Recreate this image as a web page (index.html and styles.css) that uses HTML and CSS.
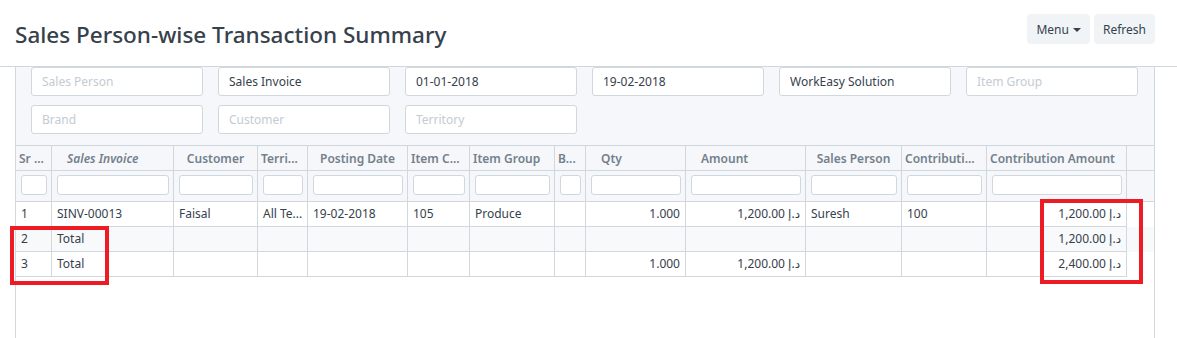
FILE: index.html
```html
<!DOCTYPE html>
<html>
  <head>
    <title>Sales Person-wise Transaction Summary</title>
    <meta name="viewport" content="width=device-width, initial-scale=1.0">
    <link rel="stylesheet" href="styles.css">
  </head>
  <body>
    <div class="css-head">
      <h1 class="css-title">Sales Person-wise Transaction Summary</h1>
      <div class="css-actions">
        <button class="css-button">Menu <span class="css-caret"></span></button>
        <button class="css-button">Refresh</button>
      </div>
    </div>

    <div class="css-page">
      <div class="css-filters">
        <input class="css-input" placeholder="Sales Person">
        <input class="css-input" value="Sales Invoice">
        <input class="css-input" value="01-01-2018">
        <input class="css-input" value="19-02-2018">
        <input class="css-input" value="WorkEasy Solution">
        <input class="css-input" placeholder="Item Group">
        <input class="css-input" placeholder="Brand">
        <input class="css-input" placeholder="Customer">
        <input class="css-input" placeholder="Territory">
      </div>

      <div class="css-table">
        <div class="css-row css-row-head">
          <div class="css-cell">Sr ...</div>
          <div class="css-cell css-pad css-sorted">Sales Invoice</div>
          <div class="css-cell css-center">Customer</div>
          <div class="css-cell">Terri...</div>
          <div class="css-cell css-center">Posting Date</div>
          <div class="css-cell">Item C...</div>
          <div class="css-cell">Item Group</div>
          <div class="css-cell">B...</div>
          <div class="css-cell css-pad">Qty</div>
          <div class="css-cell css-pad">Amount</div>
          <div class="css-cell css-center">Sales Person</div>
          <div class="css-cell">Contributi...</div>
          <div class="css-cell">Contribution Amount</div>
          <div class="css-cell css-last"></div>
        </div>

        <div class="css-row css-row-filter">
          <div class="css-cell"><input class="css-small"></div>
          <div class="css-cell"><input class="css-small"></div>
          <div class="css-cell"><input class="css-small"></div>
          <div class="css-cell"><input class="css-small"></div>
          <div class="css-cell"><input class="css-small"></div>
          <div class="css-cell"><input class="css-small"></div>
          <div class="css-cell"><input class="css-small"></div>
          <div class="css-cell"><input class="css-small"></div>
          <div class="css-cell"><input class="css-small"></div>
          <div class="css-cell"><input class="css-small"></div>
          <div class="css-cell"><input class="css-small"></div>
          <div class="css-cell"><input class="css-small"></div>
          <div class="css-cell"><input class="css-small"></div>
          <div class="css-cell css-last"></div>
        </div>

        <div class="css-row">
          <div class="css-cell">1</div>
          <div class="css-cell">SINV-00013</div>
          <div class="css-cell">Faisal</div>
          <div class="css-cell">All Te...</div>
          <div class="css-cell">19-02-2018</div>
          <div class="css-cell">105</div>
          <div class="css-cell">Produce</div>
          <div class="css-cell"></div>
          <div class="css-cell css-right">1.000</div>
          <div class="css-cell css-right">د.إ 1,200.00</div>
          <div class="css-cell">Suresh</div>
          <div class="css-cell">100</div>
          <div class="css-cell css-right">د.إ 1,200.00</div>
        </div>

        <div class="css-row css-row-total">
          <div class="css-cell">2</div>
          <div class="css-cell">Total</div>
          <div class="css-cell"></div>
          <div class="css-cell"></div>
          <div class="css-cell"></div>
          <div class="css-cell"></div>
          <div class="css-cell"></div>
          <div class="css-cell"></div>
          <div class="css-cell"></div>
          <div class="css-cell"></div>
          <div class="css-cell"></div>
          <div class="css-cell"></div>
          <div class="css-cell css-right">د.إ 1,200.00</div>
        </div>

        <div class="css-row">
          <div class="css-cell">3</div>
          <div class="css-cell">Total</div>
          <div class="css-cell"></div>
          <div class="css-cell"></div>
          <div class="css-cell"></div>
          <div class="css-cell"></div>
          <div class="css-cell"></div>
          <div class="css-cell"></div>
          <div class="css-cell css-right">1.000</div>
          <div class="css-cell css-right">د.إ 1,200.00</div>
          <div class="css-cell"></div>
          <div class="css-cell"></div>
          <div class="css-cell css-right">د.إ 2,400.00</div>
        </div>
      </div>
    </div>

    <!-- red boxes drawn over the screenshot -->
    <div class="css-mark css-mark-left"></div>
    <div class="css-mark css-mark-right"></div>
  </body>
</html>
```

FILE: styles.css
```css
body{
  margin: 0;
  font-family: "Noto Sans", "DejaVu Sans", sans-serif;
  color: #36414c;
  background-color: white;
}

.css-head{
  display: flex;
  justify-content: space-between;
  align-items: flex-start;
  height: 66px;
  border-bottom: 1px solid #d1d8dd;
  padding: 0 22px 0 15px;
}
.css-title{
  margin: 0;
  padding-top: 19px;
  font-size: 22.5px;
  line-height: 32px;
  font-weight: 500;
  color: #36414c;
}
.css-actions{
  display: flex;
  gap: 4px;
  margin-top: 14px;
}
.css-button{
  height: 30px;
  padding: 0 9px;
  border: none;
  border-radius: 4px;
  background-color: #f0f4f7;
  color: #36414c;
  font-family: inherit;
  font-size: 12px;
  cursor: pointer;
}
.css-caret{
  display: inline-block;
  margin-left: 1px;
  vertical-align: middle;
  border-top: 4px solid #36414c;
  border-left: 4px solid transparent;
  border-right: 4px solid transparent;
}

.css-page{
  margin: 0 22px 0 15px;
  height: 271px;
  border-left: 1px solid #d1d8dd;
  border-right: 1px solid #d1d8dd;
}
.css-filters{
  display: grid;
  grid-template-columns: repeat(6, 172px);
  column-gap: 15px;
  row-gap: 9px;
  padding: 0 0 11px 15px;
  background-color: #f5f7fa;
  border-bottom: 1px solid #d1d8dd;
}
.css-input{
  height: 29px;
  box-sizing: border-box;
  padding: 0 10px;
  border: 1px solid #d1d8dd;
  border-radius: 3px;
  background-color: white;
  color: #36414c;
  font-family: inherit;
  font-size: 12px;
}
.css-input::placeholder{
  color: #c3cbd3;
}

.css-table{
  font-size: 12px;
}
.css-row{
  display: grid;
  grid-template-columns: 36px 122px 84px 50px 100px 62px 85px 31px 100px 120px 96px 85px 140px 27px;
  height: 25px;
}
.css-cell{
  box-sizing: border-box;
  padding: 0 5px;
  line-height: 24px;
  border-right: 1px solid #d1d8dd;
  border-bottom: 1px solid #d1d8dd;
  white-space: nowrap;
  overflow: hidden;
}
.css-row-head{
  background-color: #f5f7fa;
}
.css-row-head .css-cell{
  padding: 1px 3px 0;
  color: #74808b;
  font-weight: 600;
}
.css-row-head .css-pad{
  padding-left: 15px;
}
.css-row-head .css-sorted{
  font-style: italic;
}
.css-center{
  text-align: center;
}
.css-right{
  text-align: right;
}
.css-last{
  border-right: none;
}
.css-row-filter{
  height: 31px;
  background-color: #f5f7fa;
}
.css-row-filter .css-cell{
  padding: 4px 4px 0 5px;
}
.css-small{
  display: block;
  width: 100%;
  height: 20px;
  box-sizing: border-box;
  border: 1px solid #d1d8dd;
  border-radius: 3px;
  background-color: white;
}
.css-row-total{
  background-color: #f8f9fb;
}

.css-mark{
  position: absolute;
  box-sizing: border-box;
  border: 4px solid #ed1c24;
}
.css-mark-left{
  left: 10px;
  top: 226px;
  width: 99px;
  height: 59px;
}
.css-mark-right{
  left: 1040px;
  top: 199px;
  width: 103px;
  height: 85px;
}
```
